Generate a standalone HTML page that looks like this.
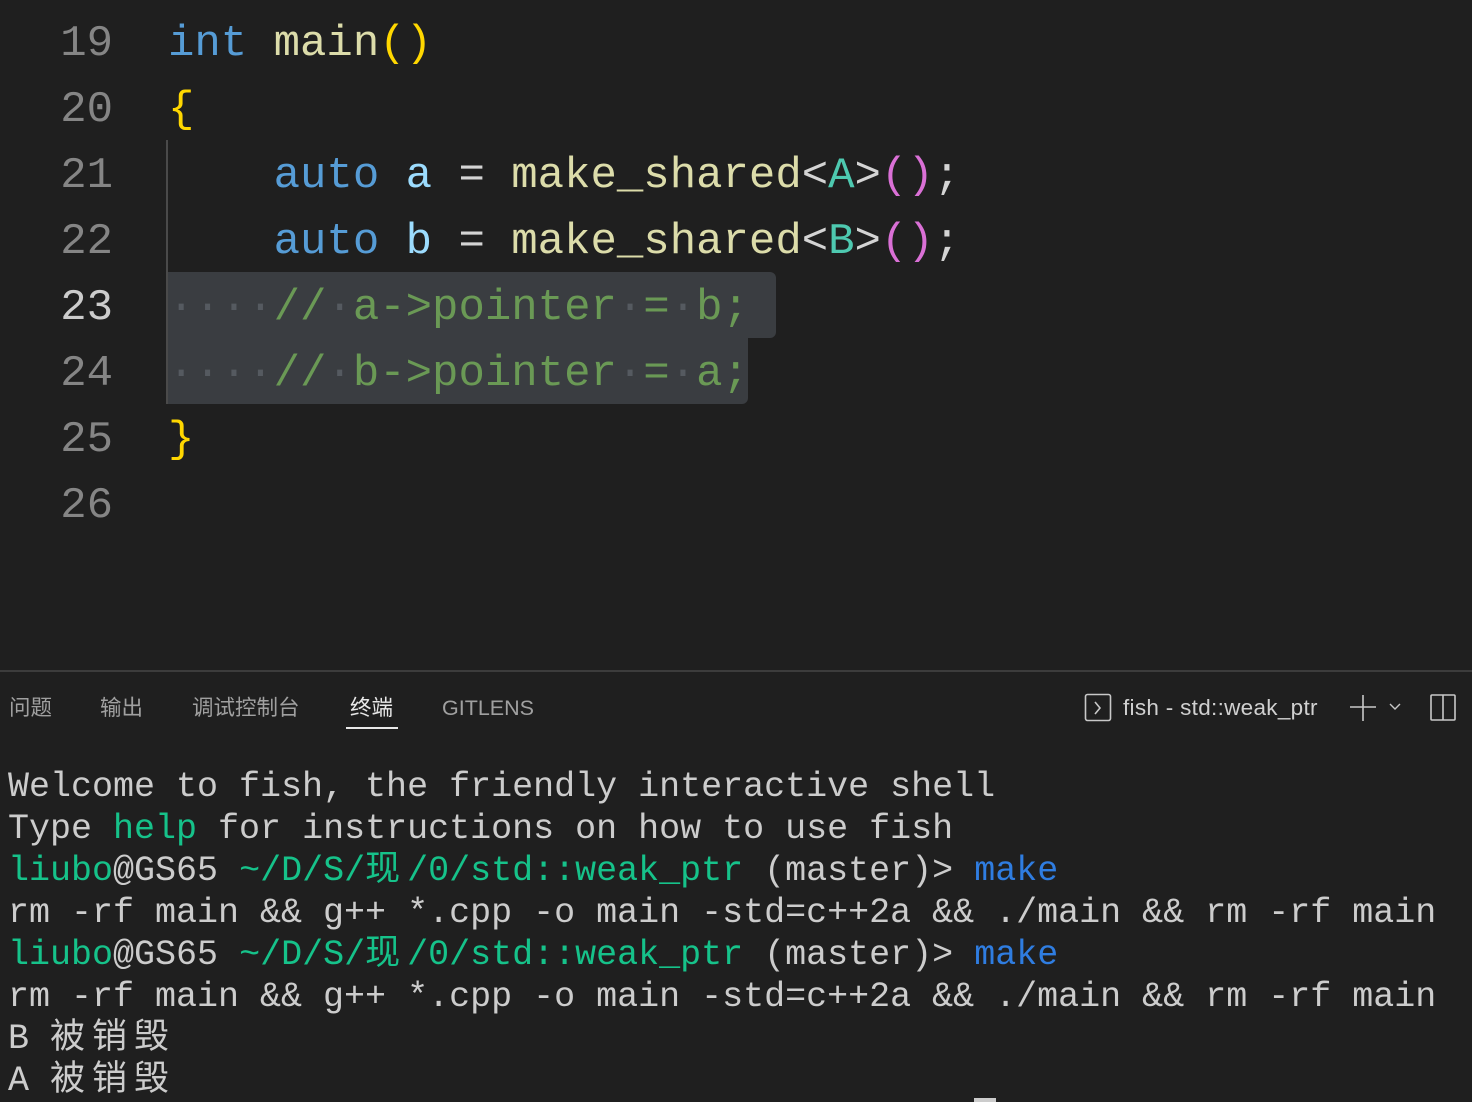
<!DOCTYPE html>
<html><head><meta charset="utf-8"><style>
html,body{margin:0;padding:0;width:1472px;height:1102px;background:#1f1f1f;overflow:hidden}
.ed{position:absolute;left:0;top:0;width:1472px;height:670px;background:#1f1f1f;font-family:"Liberation Mono","DejaVu Sans Mono",monospace;font-size:44px}
.row{position:absolute;left:0;height:66px;line-height:66px;white-space:pre}
.ln{position:absolute;width:113px;text-align:right;color:#858585;left:0}
.code{position:absolute;left:168px;color:#d4d4d4}
.k{color:#569cd6}.f{color:#dcdcaa}.v{color:#9cdcfe}.t{color:#4ec9b0}.p{color:#da70d6}.b{color:#ffd700}.c{color:#6a9955}.ws{color:#555a60}
.sel{position:absolute;background:#3a3d41}
.div{position:absolute;left:0;top:670px;width:1472px;height:2px;background:#3c3c3c}
.tabs{position:absolute;top:694px;font-family:"Liberation Sans","Noto Sans CJK SC",sans-serif;font-size:21.5px;color:#a0a0a0;line-height:28px}
.term{position:absolute;left:8px;top:766px;font-family:"Liberation Mono","Noto Sans CJK SC",monospace;font-size:35px;line-height:42px;color:#cccccc;white-space:pre}
.g{color:#16c28a}.m{color:#2f7de1}
.cj{display:inline-block;width:42px;text-align:left}
</style></head><body>
<div class="ed">
<div class="sel" style="left:168px;top:272px;width:608px;height:66px;border-radius:0 6px 6px 0"></div>
<div class="sel" style="left:168px;top:338px;width:580px;height:66px;border-radius:0 0 6px 0"></div>
<div style="position:absolute;left:166px;top:140px;width:2px;height:264px;background:#4a4a4a"></div>
<div class="row" style="top:11px"><span class="ln">19</span><span class="code"><span class="k">int</span> <span class="f">main</span><span class="b">()</span></span></div>
<div class="row" style="top:77px"><span class="ln">20</span><span class="code"><span class="b">{</span></span></div>
<div class="row" style="top:143px"><span class="ln">21</span><span class="code">    <span class="k">auto</span> <span class="v">a</span> = <span class="f">make_shared</span>&lt;<span class="t">A</span>&gt;<span class="p">()</span>;</span></div>
<div class="row" style="top:209px"><span class="ln">22</span><span class="code">    <span class="k">auto</span> <span class="v">b</span> = <span class="f">make_shared</span>&lt;<span class="t">B</span>&gt;<span class="p">()</span>;</span></div>
<div class="row" style="top:275px"><span class="ln" style="color:#cccccc">23</span><span class="code c"><span class="ws">····</span>//<span class="ws">·</span>a-&gt;pointer<span class="ws">·</span>=<span class="ws">·</span>b;</span></div>
<div class="row" style="top:341px"><span class="ln">24</span><span class="code c"><span class="ws">····</span>//<span class="ws">·</span>b-&gt;pointer<span class="ws">·</span>=<span class="ws">·</span>a;</span></div>
<div class="row" style="top:407px"><span class="ln">25</span><span class="code"><span class="b">}</span></span></div>
<div class="row" style="top:473px"><span class="ln">26</span></div>
</div>
<div class="div"></div>
<div class="tabs" style="left:9px">问题</div>
<div class="tabs" style="left:100px">输出</div>
<div class="tabs" style="left:192px">调试控制台</div>
<div class="tabs" style="left:350px;color:#e8e8e8">终端</div>
<div style="position:absolute;left:346px;top:727px;width:52px;height:2px;background:#e8e8e8"></div>
<div class="tabs" style="left:442px">GITLENS</div>
<svg style="position:absolute;left:1084px;top:693px" width="30" height="30" viewBox="0 0 30 30"><rect x="1.5" y="1.5" width="25" height="26" rx="2" fill="none" stroke="#c8c8c8" stroke-width="1.6"/><path d="M11 9l5 6-5 6" fill="none" stroke="#c8c8c8" stroke-width="1.6"/></svg>
<div class="tabs" style="left:1123px;color:#d0d0d0;font-size:22.5px;letter-spacing:0.3px">fish - std::weak_ptr</div>
<svg style="position:absolute;left:1348px;top:693px" width="60" height="30" viewBox="0 0 60 30"><path d="M15 2v26M2 14h26" stroke="#c8c8c8" stroke-width="1.6"/><path d="M42 11l5 5 5-5" fill="none" stroke="#c8c8c8" stroke-width="1.4"/></svg>
<svg style="position:absolute;left:1429px;top:693px" width="30" height="30" viewBox="0 0 30 30"><rect x="2" y="2" width="24" height="25" rx="1" fill="none" stroke="#c8c8c8" stroke-width="1.6"/><path d="M14 2v25" stroke="#c8c8c8" stroke-width="1.6"/></svg>
<div class="term">Welcome to fish, the friendly interactive shell
Type <span class="g">help</span> for instructions on how to use fish
<span class="g">liubo</span>@GS65 <span class="g">~/D/S/<span class="cj">现</span>/0/std::weak_ptr</span> (master)&gt; <span class="m">make</span>
rm -rf main &amp;&amp; g++ *.cpp -o main -std=c++2a &amp;&amp; ./main &amp;&amp; rm -rf main
<span class="g">liubo</span>@GS65 <span class="g">~/D/S/<span class="cj">现</span>/0/std::weak_ptr</span> (master)&gt; <span class="m">make</span>
rm -rf main &amp;&amp; g++ *.cpp -o main -std=c++2a &amp;&amp; ./main &amp;&amp; rm -rf main
B <span class="cj">被</span><span class="cj">销</span><span class="cj">毁</span>
A <span class="cj">被</span><span class="cj">销</span><span class="cj">毁</span></div>
<div style="position:absolute;left:974px;top:1098px;width:22px;height:4px;background:#cccccc"></div>
</body></html>
